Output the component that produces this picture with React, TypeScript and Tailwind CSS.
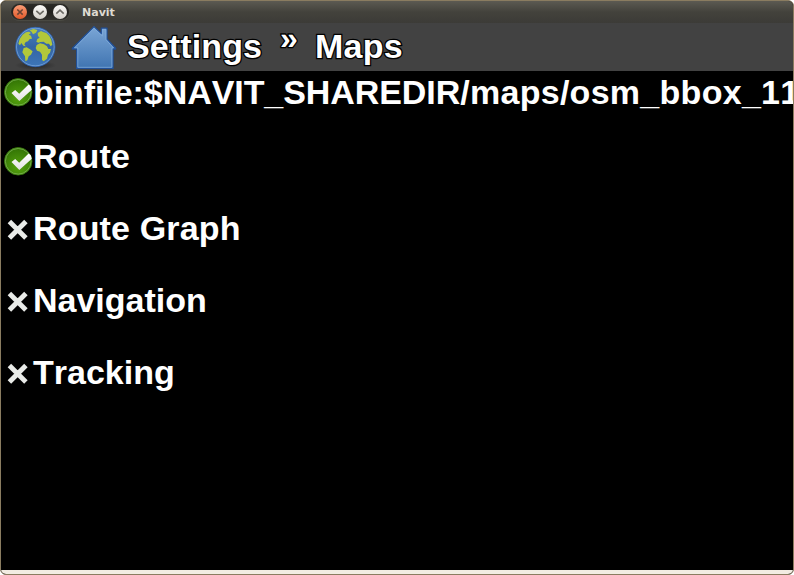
import React from "react";

const base =
  "font-['Liberation_Sans',Arial,sans-serif] font-bold leading-[40px] whitespace-nowrap text-white [font-kerning:none]";
const heading = base + " text-[34px]";
const outline = " [-webkit-text-stroke:2.6px_black] [paint-order:stroke_fill]";

function WindowButtons() {
  return (
    <svg width="60" height="20" viewBox="10 2 60 20" className="block">
      <defs>
        <linearGradient id="pill" x1="0" y1="0" x2="0" y2="1">
          <stop offset="0" stopColor="#2b2a26" />
          <stop offset="0.5" stopColor="#22211e" />
          <stop offset="1" stopColor="#33322e" />
        </linearGradient>
        <linearGradient id="closeFill" x1="0" y1="0" x2="0" y2="1">
          <stop offset="0" stopColor="#f99c75" />
          <stop offset="1" stopColor="#e2592a" />
        </linearGradient>
        <linearGradient id="btnFill" x1="0" y1="0" x2="0" y2="1">
          <stop offset="0" stopColor="#fbfaf8" />
          <stop offset="1" stopColor="#d5d1cb" />
        </linearGradient>
      </defs>
      <rect x="10.7" y="3.5" width="58.8" height="17" rx="8.5" fill="url(#pill)" stroke="#56554e" strokeWidth="0.6" />
      <circle cx="20" cy="12" r="7" fill="url(#closeFill)" />
      <circle cx="40" cy="12" r="7" fill="url(#btnFill)" />
      <circle cx="60" cy="12" r="7" fill="url(#btnFill)" />
      <path d="M17.3 9.5l5.4 5.2m0-5.2l-5.4 5.2" stroke="#6b4334" strokeWidth="1.6" />
      <path d="M36.3 10.8l3.7 3.4 3.7-3.4M56.3 13.6l3.7-3.4 3.7 3.4" fill="none" stroke="#6b6964" strokeWidth="1.6" />
    </svg>
  );
}

function Globe() {
  return (
    <svg width="48" height="48" viewBox="1 -1 144 144" className="block">
      <defs>
        <linearGradient id="sea" x1="0" y1="0" x2="0" y2="1">
          <stop offset="0" stopColor="#4a80c0" />
          <stop offset="0.5" stopColor="#3465a4" />
          <stop offset="1" stopColor="#3d76b8" />
        </linearGradient>
        <radialGradient id="shade">
          <stop offset="0" stopColor="#111" stopOpacity="0.6" />
          <stop offset="1" stopColor="#111" stopOpacity="0" />
        </radialGradient>
      </defs>
      <ellipse cx="72" cy="126" rx="62" ry="14" fill="url(#shade)" />
      <circle cx="71" cy="71" r="59" fill="url(#sea)" stroke="#2c5ea6" strokeWidth="3" />
      <g fill="#b3c83a">
        <path d="M20 61L24 47L33 34L43 27L52 25L58 29L51 34L58 37L61 46L54 47L49 54L42 56L38 63L42 69L35 67L29 59L25 66Z" />
        <path d="M54 21L65 17L77 20L73 28L64 33L60 26Z" />
        <path d="M36 74L45 72L55 78L63 84L58 94L51 99L47 111L41 114L40 99L32 87Z" />
        <path d="M78 29L88 23L94 26L104 29L113 38L119 50L122 64L117 69L112 61L104 61L96 55L86 56L80 58L74 55L77 47L84 43L79 38Z" />
        <path d="M75 65L85 60L97 63L106 69L110 77L118 77L115 88L109 94L106 106L96 114L91 110L91 94L85 85L76 82L72 74Z" />
      </g>
      <circle cx="71" cy="71" r="56.5" fill="none" stroke="#80ace0" strokeOpacity="0.85" strokeWidth="2.5" />
    </svg>
  );
}

function House() {
  return (
    <svg width="46" height="48" viewBox="71 23 46 48" className="block">
      <defs>
        <linearGradient id="wall" x1="0" y1="0" x2="0" y2="1">
          <stop offset="0" stopColor="#7ba6d6" />
          <stop offset="1" stopColor="#3f74b1" />
        </linearGradient>
      </defs>
      <path d="M94 26.6L101.3 33.6V28.2H107V39L115.6 48.2V49H113V68.4H76.7V49H72.4V48.2Z" fill="url(#wall)" stroke="#204f97" strokeWidth="1.3" strokeLinejoin="round" />
      <path d="M94 28.2L102.4 36V29.4H105.9V39.6L113.4 47.8H111.9V67.3H77.8V47.8H74.6Z" fill="none" stroke="#80acdc" strokeWidth="0.8" />
    </svg>
  );
}

function Check() {
  return (
    <svg width="30" height="30" viewBox="0 0 30 30" className="block">
      <defs>
        <radialGradient id="green" cx="0.5" cy="0.7" r="0.65">
          <stop offset="0" stopColor="#55a30e" />
          <stop offset="1" stopColor="#347605" />
        </radialGradient>
        <linearGradient id="tick" x1="0" y1="0" x2="0" y2="1">
          <stop offset="0" stopColor="#fff" />
          <stop offset="1" stopColor="#e2e2e2" />
        </linearGradient>
      </defs>
      <circle cx="15.2" cy="15.3" r="13.7" fill="url(#green)" stroke="#38760e" strokeWidth="1" />
      <circle cx="15.2" cy="15.3" r="12.8" fill="none" stroke="#7fb558" strokeWidth="0.8" />
      <path d="M8.5 16L12.2 13.1L16.2 16.8L25.6 7.6L27.8 9.2L28.8 12.8L16.3 24Z" fill="url(#tick)" />
    </svg>
  );
}

function Cross() {
  return (
    <svg width="30" height="30" viewBox="0 0 30 30" className="block">
      <path d="M6.4 6.5L22.9 22.9M22.9 6.5L6.4 22.9" stroke="#e9ebe8" strokeWidth="4.9" />
    </svg>
  );
}

function Row({ label, enabled, spacing = "" }: { label: string; enabled: boolean; spacing?: string }) {
  return (
    <li className="flex h-[72px] items-center">
      <span className={enabled ? "mt-[10px] shrink-0" : "mt-[3px] shrink-0"}>{enabled ? <Check /> : <Cross />}</span>
      <span className={heading + " " + spacing}>{label}</span>
    </li>
  );
}

export default function App() {
  return (
    <div className="bg-white">
      <div className="flex h-[575px] w-[794px] flex-col overflow-hidden rounded-[6px] border border-[#8a7c60] bg-black">
        <header className="flex h-[22px] shrink-0 items-center bg-linear-to-b from-[#5c5a52] via-[#43423c] to-[#3c3b37] pl-[9px]">
          <WindowButtons />
          <h1 className="ml-[12px] mt-[2px] font-['DejaVu_Sans',sans-serif] text-[11px] font-bold leading-[20px] text-[#dfdbd2]">Navit</h1>
        </header>
        <nav className="flex h-[48px] shrink-0 bg-[#424242] pl-[11px]">
          <Globe />
          <span className="ml-[11px]"><House /></span>
          <span className={heading + outline + " ml-[10px] mt-[3px] w-[135px] tracking-[0.12px]"}>Settings</span>
          <span className={base + outline + " ml-[18px] -mt-[5px] w-[19px] text-[32px]"}>»</span>
          <span className={heading + outline + " ml-[16px] mt-[3px] tracking-[0.25px]"}>Maps</span>
        </nav>
        <main className="min-h-0 flex-1 overflow-hidden bg-black pl-[2px]">
          <ul>
            <li className="flex h-[49px] items-start">
              <span className="mt-[6px] shrink-0"><Check /></span>
              <span className={heading + " mt-[1px]"}>
                <span className="tracking-[-0.07px]">binfile:$NAVIT_SHAREDIR</span>
                <span className="tracking-[0.28px]">/maps/osm_bbox_11</span>
              </span>
            </li>
            <Row label="Route" enabled spacing="tracking-[0.15px]" />
            <Row label="Route Graph" enabled={false} spacing="tracking-[0.16px]" />
            <Row label="Navigation" enabled={false} />
            <Row label="Tracking" enabled={false} />
          </ul>
        </main>
        <footer className="h-[4px] shrink-0 bg-[#f2ece2]" />
      </div>
    </div>
  );
}
